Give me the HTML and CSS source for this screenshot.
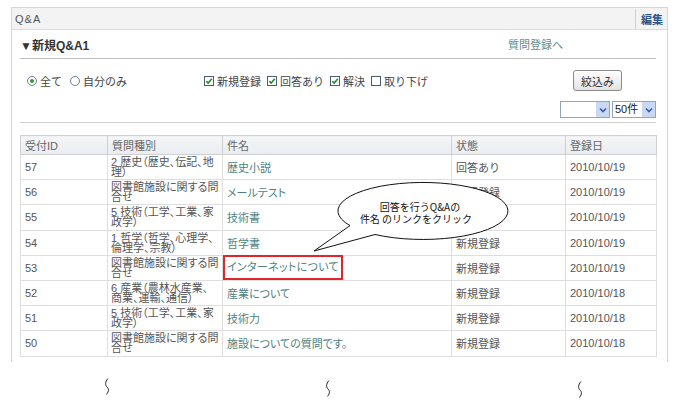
FILE: index.html
```html
<!DOCTYPE html>
<html lang="ja">
<head>
    <meta charset="UTF-8">
    <meta name="viewport" content="width=device-width, initial-scale=1.0">
    <title>Q&amp;A</title>
    <link rel="stylesheet" href="styles.css">
</head>
<body>

<div class="panel">
    <div class="panel-head">
        <span class="panel-title">Q&amp;A</span>
        <a class="edit" href="#">編集</a>
    </div>

    <div class="panel-body">
        <div class="section-head">
            <h3>▼新規Q&amp;A1</h3>
            <a class="new-link" href="#">質問登録へ</a>
        </div>

        <form class="filter" onsubmit="return false;">
            <div class="filter-row">
                <label class="radio on"><span class="dot"></span>全て</label>
                <label class="radio"><span class="dot"></span>自分のみ</label>
                <div class="checks">
                    <label class="check"><span class="box"><svg viewBox="0 0 8 8"><path d="M1.3 4.2 L3.2 6 L6.8 1.8"/></svg></span>新規登録</label>
                    <label class="check"><span class="box"><svg viewBox="0 0 8 8"><path d="M1.3 4.2 L3.2 6 L6.8 1.8"/></svg></span>回答あり</label>
                    <label class="check"><span class="box"><svg viewBox="0 0 8 8"><path d="M1.3 4.2 L3.2 6 L6.8 1.8"/></svg></span>解決</label>
                    <label class="check"><span class="box"></span>取り下げ</label>
                </div>
                <button type="submit">絞込み</button>
            </div>
            <div class="select-row">
                <span class="select wide"><span class="val"></span><span class="arrow"><svg viewBox="0 0 8 6"><path d="M1 1.5 L4 4.5 L7 1.5"/></svg></span></span>
                <span class="select num"><span class="val">50件</span><span class="arrow"><svg viewBox="0 0 8 6"><path d="M1 1.5 L4 4.5 L7 1.5"/></svg></span></span>
            </div>
        </form>

        <div class="rule"></div>

        <table class="qa-list">
            <colgroup>
                <col class="c-id">
                <col class="c-kind">
                <col class="c-name">
                <col class="c-state">
                <col class="c-date">
            </colgroup>
            <tr>
                <th>受付ID</th>
                <th>質問種別</th>
                <th>件名</th>
                <th>状態</th>
                <th>登録日</th>
            </tr>
            <tr>
                <td>57</td>
                <td class="two">2 歴史（歴史、伝記、地<br>理）</td>
                <td><a class="link" href="#">歴史小説</a></td>
                <td>回答あり</td>
                <td>2010/10/19</td>
            </tr>
            <tr>
                <td>56</td>
                <td class="two">図書館施設に関する問<br>合せ</td>
                <td><a class="link" href="#">メールテスト</a></td>
                <td>新規登録</td>
                <td>2010/10/19</td>
            </tr>
            <tr>
                <td>55</td>
                <td class="two">5 技術（工学、工業、家<br>政学）</td>
                <td><a class="link" href="#">技術書</a></td>
                <td>新規登録</td>
                <td>2010/10/19</td>
            </tr>
            <tr>
                <td>54</td>
                <td class="two">1 哲学（哲学、心理学、<br>倫理学、宗教）</td>
                <td><a class="link" href="#">哲学書</a></td>
                <td>新規登録</td>
                <td>2010/10/19</td>
            </tr>
            <tr>
                <td>53</td>
                <td class="two">図書館施設に関する問<br>合せ</td>
                <td><span class="hl"><a class="link" href="#">インターネットについて</a></span></td>
                <td>新規登録</td>
                <td>2010/10/19</td>
            </tr>
            <tr>
                <td>52</td>
                <td class="two">6 産業（農林水産業、<br>商業、運輸、通信）</td>
                <td><a class="link" href="#">産業について</a></td>
                <td>新規登録</td>
                <td>2010/10/18</td>
            </tr>
            <tr>
                <td>51</td>
                <td class="two">5 技術（工学、工業、家<br>政学）</td>
                <td><a class="link" href="#">技術力</a></td>
                <td>新規登録</td>
                <td>2010/10/18</td>
            </tr>
            <tr>
                <td>50</td>
                <td class="two">図書館施設に関する問<br>合せ</td>
                <td><a class="link" href="#">施設についての質問です。</a></td>
                <td>新規登録</td>
                <td>2010/10/18</td>
            </tr>
        </table>
    </div>
</div>

<!-- 省略記号 -->
<div class="breaks">
    <svg class="brk b1" viewBox="0 0 6 17"><path d="M4 0.5 C1 4 1 7 3 9 S5 13 2.5 16.5"/></svg>
    <svg class="brk b2" viewBox="0 0 6 17"><path d="M4 0.5 C1 4 1 7 3 9 S5 13 2.5 16.5"/></svg>
    <svg class="brk b3" viewBox="0 0 6 17"><path d="M4 0.5 C1 4 1 7 3 9 S5 13 2.5 16.5"/></svg>
</div>

<!-- 吹き出し -->
<svg class="callout" viewBox="310 180 205 75">
    <path d="M375 234.5 A85 28.5 0 1 0 350 225.6 L314 251 Z"/>
    <text x="420" y="211">回答を行うQ&amp;Aの</text>
    <text x="416" y="223">件名 のリンクをクリック</text>
</svg>

</body>
</html>
```

FILE: styles.css
```css
body {
    margin: 0;
    position: relative;
    width: 677px;
    height: 413px;
    overflow: hidden;
    background: #fff;
    font-family: "Liberation Sans", "Noto Sans CJK JP", sans-serif;
    font-size: 11px;
    color: #555;
}
a {
    text-decoration: none;
}
.panel {
    margin: 7px 0 0 11px;
    width: 655px;
    height: 354px;
    border: 1px solid #d6d6d6;
    border-bottom: none;
}
.panel-head {
    display: flex;
    align-items: center;
    height: 21px;
    padding-left: 3px;
    background: #f3f3f3;
    border-bottom: 1px solid #dcdcdc;
}
.panel-title {
    letter-spacing: 1px;
    color: #555;
}
.edit {
    margin-left: auto;
    align-self: flex-end;
    display: flex;
    align-items: center;
    height: 19px;
    padding: 0 4px 1px 5px;
    border-left: 1px solid #d0d0d0;
    color: #2b5589;
    font-weight: bold;
}
.panel-body {
    padding: 0 11px 0 8px;
}
.section-head {
    display: flex;
    align-items: center;
    height: 28px;
    border-bottom: 1px solid #bdbdbd;
}
.section-head h3 {
    margin: 0;
    font-size: 12px;
    font-weight: bold;
    color: #333;
}
.new-link {
    margin-left: auto;
    margin-right: 93px;
    color: #5e8e8e;
}
.filter-row {
    display: flex;
    align-items: center;
    height: 21px;
    margin-top: 11px;
}
.radio, .check {
    display: flex;
    align-items: center;
    gap: 3px;
    color: #444;
}
.radio:first-child {
    margin-left: 7px;
}
.radio + .radio {
    margin-left: 8px;
}
.dot {
    position: relative;
    width: 10px;
    height: 10px;
    box-sizing: border-box;
    border: 1px solid #6d7f95;
    border-radius: 50%;
    background: #fff;
}
.radio.on .dot::after {
    content: "";
    position: absolute;
    left: 2px;
    top: 2px;
    width: 4px;
    height: 4px;
    border-radius: 50%;
    background: #2f9a2f;
}
.checks {
    display: flex;
    gap: 6px;
    margin-left: 77px;
}
.box {
    display: flex;
    align-items: center;
    justify-content: center;
    width: 10px;
    height: 10px;
    box-sizing: border-box;
    border: 1px solid #4b5d70;
    background: #fff;
}
.box svg {
    width: 8px;
    height: 8px;
    fill: none;
    stroke: #239023;
    stroke-width: 1.6;
}
.filter-row button {
    margin-left: auto;
    margin-right: 34px;
    width: 49px;
    height: 21px;
    padding: 0;
    border: 1px solid #8a8a8a;
    border-radius: 3px;
    background: linear-gradient(#ffffff, #e2e2e2);
    font-family: "Liberation Sans", "Noto Sans CJK JP", sans-serif;
    font-size: 11px;
    color: #333;
}
.select-row {
    display: flex;
    justify-content: flex-end;
    gap: 2px;
    margin-top: 10px;
    height: 17px;
}
.select {
    display: flex;
    height: 17px;
    box-sizing: border-box;
    border: 1px solid #8fa6bf;
    background: #fff;
}
.select.wide {
    width: 50px;
}
.select.num {
    width: 44px;
}
.val {
    flex: 1;
    padding-left: 2px;
    line-height: 15px;
    color: #222;
}
.arrow {
    display: flex;
    align-items: center;
    justify-content: center;
    width: 13px;
    background: #c9d8f3;
}
.arrow svg {
    width: 8px;
    height: 6px;
    fill: none;
    stroke: #3a5ea8;
    stroke-width: 1.6;
}
.rule {
    margin-top: 4px;
    border-top: 1px solid #cfcfcf;
}
.qa-list {
    margin-top: 12px;
    width: 636px;
    border-collapse: collapse;
    table-layout: fixed;
    border: 1px solid #cccccc;
}
.c-id { width: 87px; }
.c-kind { width: 115px; }
.c-name { width: 229px; }
.c-state { width: 114px; }
.c-date { width: 91px; }
.qa-list th {
    height: 18px;
    padding: 0 4px;
    text-align: left;
    font-weight: normal;
    color: #666;
    background: linear-gradient(#f4f6f8, #e9edf1);
    border: 1px solid #d0d0d0;
}
.qa-list td {
    height: 24.2px;
    padding: 0 4px;
    border: 1px solid #dedede;
    vertical-align: middle;
    white-space: nowrap;
}
.qa-list td.two {
    padding-left: 3px;
    line-height: 10px;
    font-feature-settings: "palt";
}
.link {
    color: #4e7f80;
    font-feature-settings: "palt";
}
.hl {
    display: inline-block;
    box-sizing: border-box;
    width: 120px;
    height: 25px;
    margin: -5px 0 -5px -4px;
    padding-left: 2px;
    line-height: 21px;
    border: 2px solid #e0262a;
    vertical-align: middle;
    overflow: hidden;
}
.hl .link {
    letter-spacing: 0.3px;
}
.breaks {
    display: flex;
    margin-top: 16px;
    height: 18px;
}
.brk {
    width: 6px;
    height: 17px;
    fill: none;
    stroke: #222;
    stroke-width: 1;
}
.b1 { margin-left: 104px; }
.b2 { margin-left: 215px; margin-top: 2px; }
.b3 { margin-left: 246px; margin-top: 3px; }
.callout {
    position: absolute;
    left: 310px;
    top: 180px;
    width: 205px;
    height: 75px;
    overflow: visible;
}
.callout path {
    fill: #fff;
    stroke: #111;
    stroke-width: 1;
}
.callout text {
    font-family: "Noto Sans CJK JP", sans-serif;
    font-size: 10px;
    fill: #111;
    text-anchor: middle;
}
```
